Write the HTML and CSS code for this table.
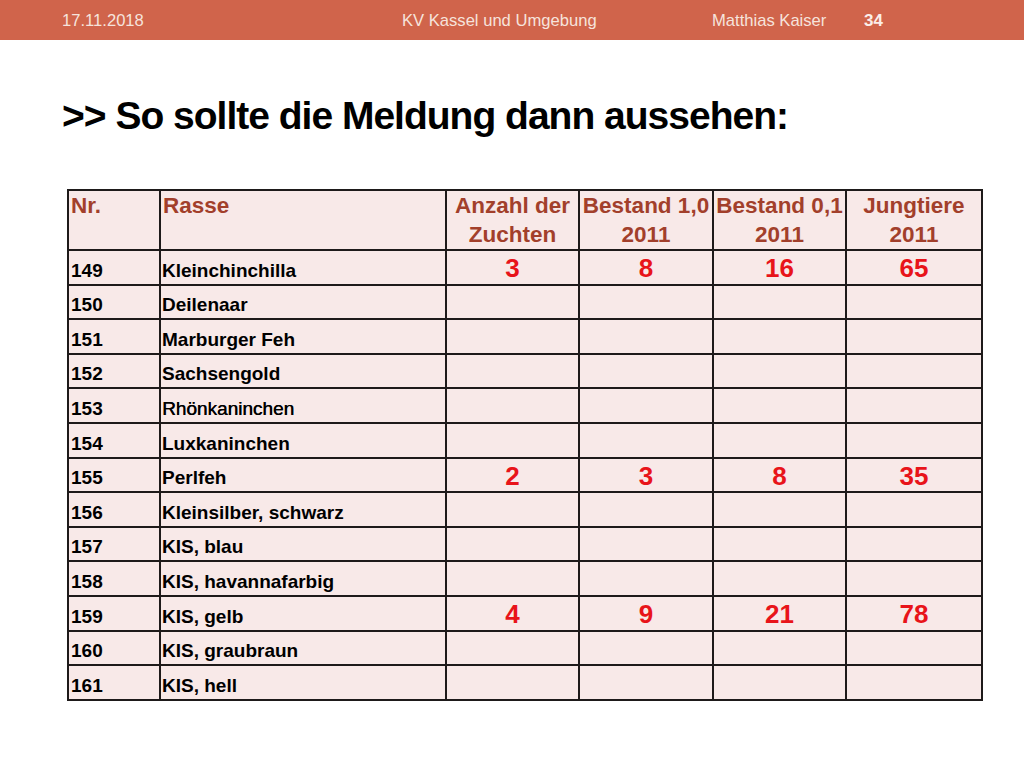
FILE: index.html
```html
<!DOCTYPE html>
<html lang="de">
<head>
<meta charset="utf-8">
<title>Meldung</title>
<link rel="stylesheet" href="styles.css">
</head>
<body>
<div class="slide">
  <header class="bar">
    <span class="date">17.11.2018</span>
    <span class="org">KV Kassel und Umgebung</span>
    <span class="author">Matthias Kaiser</span>
    <span class="page">34</span>
  </header>
  <h1 class="title">&gt;&gt; So sollte die Meldung dann aussehen:</h1>
  <table class="grid">
    <colgroup>
      <col class="c-nr"><col class="c-rasse"><col class="c-a"><col class="c-b"><col class="c-a"><col class="c-d">
    </colgroup>
    <thead>
      <tr>
        <th class="left">Nr.</th>
        <th class="left">Rasse</th>
        <th>Anzahl der Zuchten</th>
        <th>Bestand 1,0 2011</th>
        <th>Bestand 0,1 2011</th>
        <th>Jungtiere 2011</th>
      </tr>
    </thead>
    <tbody>
      <tr><td>149</td><td>Kleinchinchilla</td><td class="num">3</td><td class="num">8</td><td class="num">16</td><td class="num">65</td></tr>
      <tr><td>150</td><td>Deilenaar</td><td></td><td></td><td></td><td></td></tr>
      <tr><td>151</td><td>Marburger Feh</td><td></td><td></td><td></td><td></td></tr>
      <tr><td>152</td><td>Sachsengold</td><td></td><td></td><td></td><td></td></tr>
      <tr><td>153</td><td class="light">Rhönkaninchen</td><td></td><td></td><td></td><td></td></tr>
      <tr><td>154</td><td>Luxkaninchen</td><td></td><td></td><td></td><td></td></tr>
      <tr><td>155</td><td>Perlfeh</td><td class="num">2</td><td class="num">3</td><td class="num">8</td><td class="num">35</td></tr>
      <tr><td>156</td><td>Kleinsilber, schwarz</td><td></td><td></td><td></td><td></td></tr>
      <tr><td>157</td><td>KIS, blau</td><td></td><td></td><td></td><td></td></tr>
      <tr><td>158</td><td>KIS, havannafarbig</td><td></td><td></td><td></td><td></td></tr>
      <tr><td>159</td><td>KIS, gelb</td><td class="num">4</td><td class="num">9</td><td class="num">21</td><td class="num">78</td></tr>
      <tr><td>160</td><td>KIS, graubraun</td><td></td><td></td><td></td><td></td></tr>
      <tr><td>161</td><td>KIS, hell</td><td></td><td></td><td></td><td></td></tr>
    </tbody>
  </table>
</div>
</body>
</html>
```
FILE: styles.css
```css
html, body {
  margin: 0;
  padding: 0;
  background: #ffffff;
}
.slide {
  width: 1024px;
  height: 768px;
  overflow: hidden;
  font-family: "Liberation Sans", Arial, sans-serif;
}
.bar {
  height: 40px;
  background: #d0644b;
  color: #f6e3dc;
  display: flex;
  align-items: center;
  padding-left: 62px;
  padding-top: 2px;
  box-sizing: border-box;
  font-size: 16.6px;
}
.bar .date { width: 340px; }
.bar .org { width: 310px; }
.bar .author { width: 152px; }
.bar .page {
  font-weight: bold;
  font-size: 17px;
  color: #fbeee9;
}
.title {
  margin: 56px 0 0 62px;
  font-weight: bold;
  font-size: 39px;
  line-height: 39px;
  letter-spacing: -1px;
  color: #000;
}
.grid {
  margin: 54px 0 0 67px;
  border-collapse: collapse;
  table-layout: fixed;
  width: 914px;
  background: #f8e9e8;
  border: 2px solid #1e1a1a;
}
.c-nr { width: 92px; }
.c-rasse { width: 286px; }
.c-a { width: 133px; }
.c-b { width: 134px; }
.c-d { width: 136px; }
.grid th, .grid td {
  border: 2px solid #1e1a1a;
  padding: 0 1px;
  box-sizing: border-box;
}
.grid th {
  height: 58px;
  vertical-align: top;
  font-size: 22.5px;
  line-height: 29px;
  color: #a23f2b;
  font-weight: bold;
  text-align: center;
  padding-top: 0;
}
.grid th.left { text-align: left; padding-left: 2px; }
.grid td {
  height: 34.6px;
  font-size: 19px;
  font-weight: bold;
  color: #000;
  vertical-align: bottom;
  line-height: 22px;
  padding-bottom: 2px;
}
.grid td:first-child { padding-left: 2px; }
.grid td.light { font-weight: normal; text-shadow: 0.4px 0 0 #000; }
.grid td.num {
  color: #e8141a;
  font-size: 26px;
  text-align: center;
  vertical-align: middle;
  line-height: 26px;
  padding-top: 2px;
  padding-bottom: 0;
}
```
